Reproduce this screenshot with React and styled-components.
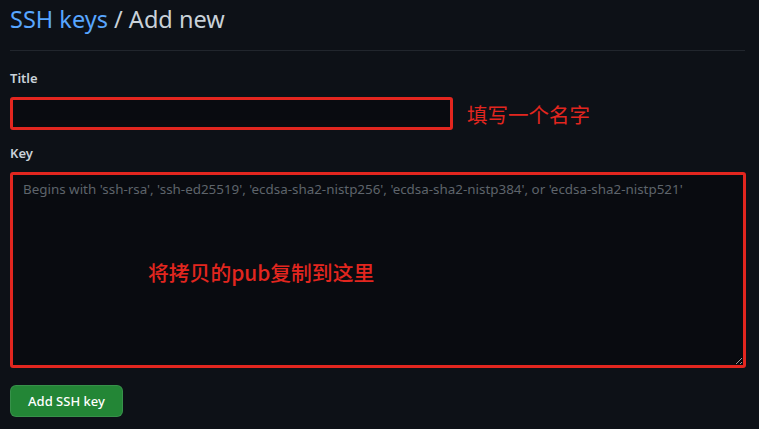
import React from "react";
import styled, { createGlobalStyle } from "styled-components";

const Global = createGlobalStyle`
  html, body { margin: 0; padding: 0; background: #0d1117; }
  body { font-family: "Noto Sans", "Noto Sans CJK SC", sans-serif; color: #c9d1d9; }
  * { box-sizing: border-box; }
`;

const Page = styled.div`
  width: 759px;
  height: 429px;
  padding: 0 14px 0 10px;
  background: #0d1117;
  overflow: hidden;
`;

const Header = styled.h2`
  margin: 0;
  height: 51px;
  padding-top: 3px;
  font-size: 23.5px;
  font-weight: 400;
  line-height: 32px;
  color: #c9d1d9;
  border-bottom: 1px solid #21262d;
`;

const Crumb = styled.a`
  color: #58a6ff;
  text-decoration: none;
`;

const Field = styled.div`
  display: flex;
  flex-direction: column;
  margin-top: ${(p) => p.$top}px;
`;

const Label = styled.label`
  font-size: 13px;
  font-weight: 600;
  line-height: 18px;
  color: #c9d1d9;
  margin-bottom: ${(p) => p.$gap}px;
`;

const Row = styled.div`
  display: flex;
  align-items: center;
  gap: 14px;
`;

const TextInput = styled.input`
  width: 443px;
  height: 33px;
  background: #090b10;
  border: 3px solid #e2261f;
  border-radius: 3px;
  color: #c9d1d9;
  outline: none;
`;

const Note = styled.span`
  font-family: "Noto Sans CJK SC", sans-serif;
  font-size: ${(p) => p.$size}px;
  font-weight: ${(p) => p.$weight || 400};
  color: #e2261f;
  line-height: 24px;
`;

const AreaWrap = styled.div`
  position: relative;
  width: 736px;
  height: 196px;
`;

const Area = styled.textarea`
  width: 100%;
  height: 100%;
  background: #090b10;
  border: 3px solid #e2261f;
  border-radius: 3px;
  padding: 5px 10px;
  font-family: "Noto Sans", sans-serif;
  font-size: 13.4px;
  line-height: 18px;
  color: #c9d1d9;
  outline: none;
  resize: vertical;
  &::placeholder { color: #5e646b; }
`;

const AreaNote = styled(Note)`
  position: absolute;
  left: 138px;
  top: 88px;
`;

const Button = styled.button`
  margin-top: 17px;
  width: 113px;
  height: 32px;
  background: #238636;
  border: 1px solid rgba(240, 246, 252, 0.1);
  border-radius: 6px;
  color: #ffffff;
  font-family: "Noto Sans", sans-serif;
  font-size: 13px;
  font-weight: 500;
  cursor: pointer;
`;

export default function App() {
  return (
    <Page>
      <Global />
      <Header>
        <Crumb href="#">SSH keys</Crumb> / Add new
      </Header>
      <Field $top={18}>
        <Label $gap={10}>Title</Label>
        <Row>
          <TextInput />
          <Note $size={20.5}>填写一个名字</Note>
        </Row>
      </Field>
      <Field $top={14}>
        <Label $gap={10}>Key</Label>
        <AreaWrap>
          <Area placeholder="Begins with 'ssh-rsa', 'ssh-ed25519', 'ecdsa-sha2-nistp256', 'ecdsa-sha2-nistp384', or 'ecdsa-sha2-nistp521'" />
          <AreaNote $size={20.8} $weight={500}>将拷贝的pub复制到这里</AreaNote>
        </AreaWrap>
      </Field>
      <Button>Add SSH key</Button>
    </Page>
  );
}
